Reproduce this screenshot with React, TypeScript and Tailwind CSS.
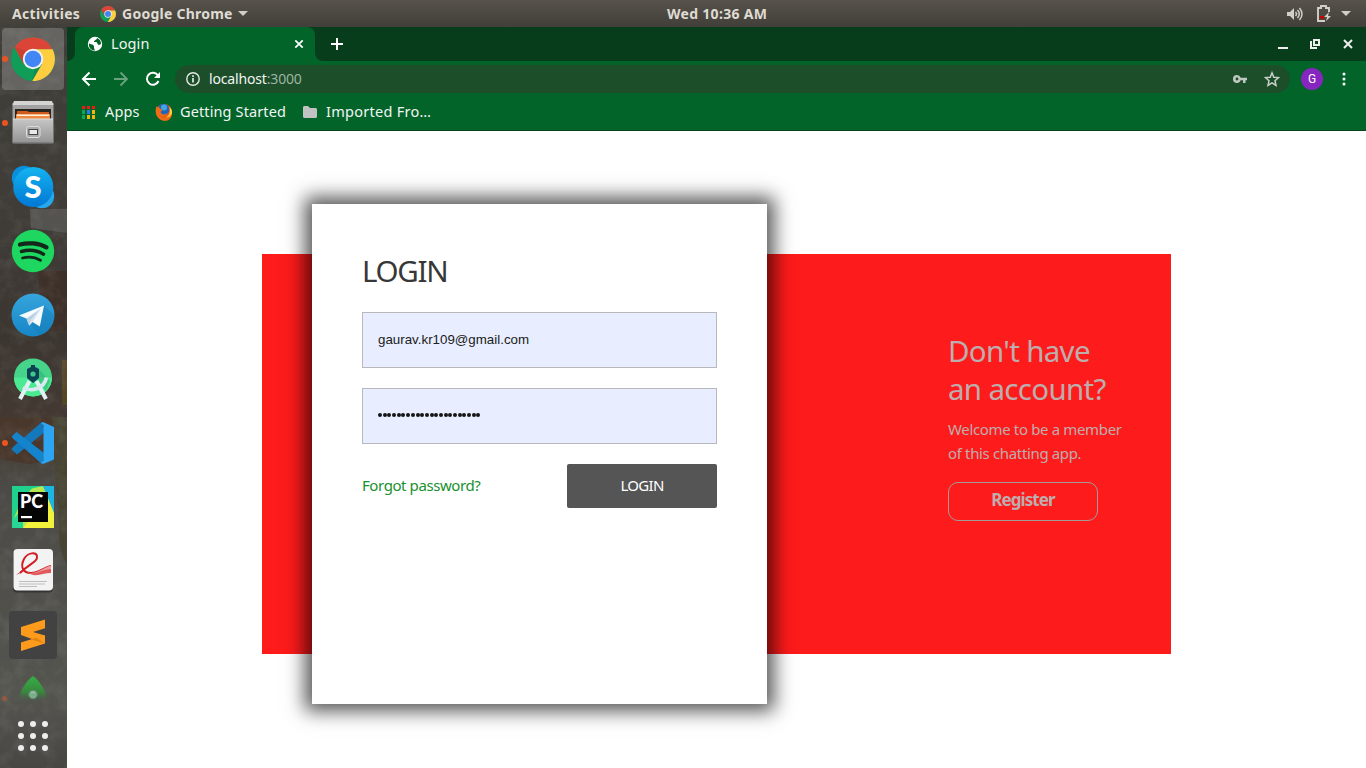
import React from "react";

type IconProps = { className?: string };

const ChromeIcon = ({ className }: IconProps) => (
  <svg viewBox="0 0 44 44" className={className}>
    <circle cx="22" cy="22" r="22" fill="#0f9d58" />
    <path d="M3.500 10.200A22 22 0 0 1 41.600 12.200H22L12.500 27z" fill="#db4437" />
    <path d="M22 12.200H41.600A22 22 0 0 1 21.200 44L31 27z" fill="#ffcd40" />
    <path d="M3.500 10.200 12.900 27 16 14z" fill="#b23a2c" opacity=".35" />
    <path d="M31 27 21.200 44 24 31z" fill="#0b7a44" opacity=".4" />
    <circle cx="22" cy="22" r="10.200" fill="#f1f1f1" />
    <circle cx="22" cy="22" r="8.300" fill="#4285f4" />
  </svg>
);

const FilesIcon = () => (
  <svg viewBox="0 0 44 46" className="h-[46px] w-11">
    <defs>
      <linearGradient id="metal" x1="0" y1="0" x2="0" y2="1">
        <stop offset="0" stopColor="#c6c6c6" />
        <stop offset="1" stopColor="#939393" />
      </linearGradient>
    </defs>
    <path d="M1.500 3h41v40h-41z" fill="#a3a3a3" />
    <path d="M3 1h38l1.500 4h-41z" fill="#d4d4d4" />
    <path d="M4 9h36v11H4z" fill="#29251f" />
    <path d="M6 11h10l2 1h20v8H6z" fill="#cf5a1d" />
    <path d="M5 14h34v5H5z" fill="#f08a42" />
    <path d="M6 14.500h32v1.500H6z" fill="#fff1dc" />
    <path d="M2 19h40v24H2z" fill="url(#metal)" />
    <path d="M2 18.500h40v1H2z" fill="#dedede" />
    <path d="M2 42.500h40v1.500H2z" fill="#666" />
    <rect x="15.500" y="26.500" width="13.500" height="11" rx="2" fill="#aaa" stroke="#ddd" />
    <rect x="18" y="29.500" width="8.500" height="5" fill="#e9e9e9" stroke="#444" />
  </svg>
);

const SkypeIcon = () => (
  <svg viewBox="0 0 44 44" className="size-11">
    <defs>
      <linearGradient id="sky" x1="0" y1="0" x2="0" y2="1">
        <stop offset="0" stopColor="#14b4f0" />
        <stop offset="1" stopColor="#0078d4" />
      </linearGradient>
    </defs>
    <circle cx="13" cy="13" r="12.200" fill="#0a8fdc" />
    <circle cx="31" cy="31" r="12.200" fill="#28a8ea" />
    <circle cx="22.300" cy="22" r="20" fill="url(#sky)" />
    <text x="22" y="33" textAnchor="middle" fontFamily="Lato, sans-serif" fontWeight="900" fontSize="31" fill="#fff">S</text>
  </svg>
);

const SpotifyIcon = () => (
  <svg viewBox="0 0 44 44" className="size-11">
    <circle cx="22" cy="22" r="21.200" fill="#1ed760" />
    <g fill="none" stroke="#12281a" strokeLinecap="round">
      <path d="M9 15.600c8-2.300 19-1.700 26.500 2.800" strokeWidth="4.200" />
      <path d="M10.500 22.500c7-2 15.500-1.200 22 2.700" strokeWidth="3.400" />
      <path d="M11.500 29c6-1.500 12.500-1 18 2.300" strokeWidth="2.800" />
    </g>
  </svg>
);

const TelegramIcon = () => (
  <svg viewBox="0 0 44 44" className="size-11">
    <defs>
      <linearGradient id="tg" x1="0" y1="0" x2="0" y2="1">
        <stop offset="0" stopColor="#36a5dc" />
        <stop offset="1" stopColor="#1686c8" />
      </linearGradient>
    </defs>
    <circle cx="22" cy="22" r="21.500" fill="url(#tg)" />
    <path d="M33 12.500 43 22a21.500 21.500 0 0 1-14 20L19 31z" fill="#1273aa" opacity=".28" />
    <path d="M8 22.500 33 12.500 28.800 33.500 21.500 29 18.200 32.500 15.500 25.500z" fill="#f6fafd" />
    <path d="M15.500 25.500 30 15.500 20 27 18.200 32.500z" fill="#b9cfe2" />
    <path d="M20 27 30 15.500 21.500 29 18.200 32.500z" fill="#d5e2ee" />
  </svg>
);

const AndroidStudioIcon = () => (
  <svg viewBox="0 0 44 44" className="size-11">
    <circle cx="22" cy="20.500" r="19" fill="#45d48a" />
    <path d="M3 20.500h38a19 19 0 0 1-38 0z" fill="#4bea92" />
    <path d="M25 9 39 24l-4 10-12-14z" fill="#2faa70" opacity=".5" />
    <path d="M18.500 24 9 42M25.500 24 35 42" stroke="#e2f1f5" strokeWidth="4" />
    <path d="M12 30.500c9 5 21 1 23.500-10" fill="none" stroke="#d6eaf0" strokeWidth="3.600" />
    <path d="M20 8h4v2l4 2v9l-6 5-6-5v-9l4-2z" fill="#0b4254" />
    <circle cx="22" cy="17" r="2.600" fill="#42c88b" />
  </svg>
);

const CodeIcon = () => (
  <svg viewBox="0 0 44 44" className="size-11">
    <path d="M31 1.500 33 11 6 33l-5-4.500 1-2z" fill="#1478bd" stroke="#1478bd" strokeLinejoin="round" />
    <path d="M5.500 11.500 33 32.500 31 42.500 1.500 16.500V15z" fill="#1484cd" stroke="#1484cd" strokeLinejoin="round" />
    <path d="M32 1 43 6v32.500L32 43l-2-1.500 2.500-2V4L30 2.500z" fill="#2ea5f1" />
  </svg>
);

const PyCharmIcon = () => (
  <svg viewBox="0 0 44 44" className="size-11">
    <path d="M1 1h42v42H1z" fill="#20d18d" />
    <path d="M21 3.500 32 1l7 14v28H13L1 38l10-24z" fill="#b4e84e" />
    <path d="M1 36 12 22v21H1z" fill="#29d795" />
    <path d="M12 43 38 12l5 8v23z" fill="#f3f23b" />
    <path d="M32 1h11v27z" fill="#1bb6e2" />
    <path d="M7 7h30v30H7z" fill="#050505" />
    <text x="9" y="23.300" fontFamily="Lato, sans-serif" fontWeight="900" fontSize="18" textLength="23" lengthAdjust="spacingAndGlyphs" fill="#fff">PC</text>
    <path d="M10 31h11v2.200H10z" fill="#fff" />
  </svg>
);

const PdfIcon = () => (
  <svg viewBox="0 0 44 44" className="size-11">
    <rect x="2" y="1.500" width="40" height="42" rx="4" fill="#222" opacity=".6" />
    <rect x="2.500" y="0" width="39.500" height="41.500" rx="4" fill="#f3f3f3" />
    <path d="M9 24C19 14 27 13 26 7c-1-4-9-4-13 3-4 8-1 14 7 14 7 0 12-5 20-7" fill="none" stroke="#cf1f25" strokeWidth="2" />
    <path d="M15 22c9 6 16-3 25-6v8c-9 0-17 6-25-2z" fill="#e05a5e" />
    <path d="M20 24c8 0 13-6 20-7v3c-8 0-13 5-20 4z" fill="#f0a1a3" />
    <path d="M5 26c3-2 5-4 7-5-1 2-4 4-7 5z" fill="#cf1f25" />
    <path d="M8 32.500h28M8 35h26M8 37.500h18" stroke="#bdbdbd" />
  </svg>
);

const SublimeIcon = () => (
  <svg viewBox="0 0 48 48" className="size-12">
    <rect width="48" height="48" rx="4" fill="#424242" />
    <path d="M12 16 36 8.500v8.800L24 21l12 3.500v8L12 40v-8.500l11-3.500-11-4z" fill="#ff9b1c" />
    <path d="m22 28.500 14 4L27 26.500z" fill="#d57b0c" opacity=".7" />
  </svg>
);

const RobotIcon = () => (
  <svg viewBox="0 0 44 40" className="h-10 w-11">
    <defs>
      <linearGradient id="fade" x1="0" y1="0" x2="0" y2="1">
        <stop offset="0" stopColor="#34b045" />
        <stop offset=".6" stopColor="#38873d" />
        <stop offset="1" stopColor="#4b4e48" stopOpacity="0" />
      </linearGradient>
    </defs>
    <path d="M22 9C29 14 34 23 36 31l-6 5H14l-6-5C10 23 15 14 22 9z" fill="url(#fade)" />
    <circle cx="22" cy="27.500" r="4.300" fill="#7cae8c" stroke="#5a8b6c" />
    <path d="M20 26a3 3 0 0 1 4 0" fill="none" stroke="#a8cbb2" />
  </svg>
);

const FirefoxIcon = () => (
  <svg viewBox="0 0 18 18" className="-ml-px size-[18px]">
    <circle cx="9" cy="9" r="8" fill="#e65a16" />
    <circle cx="8.500" cy="6.500" r="5.700" fill="#1d67c1" />
    <circle cx="9" cy="4.500" r="3" fill="#43a4df" />
    <path d="M1.500 3c0 1 1 1 2 1l2 2 2 1-2 2c1 3 5 3 7 1-2 4-5 4-7 3 4 4 9 1 9-8 5 5 2 13-5 13C2 17-1 10 1.500 3z" fill="#ef6b14" />
    <path d="M14 4c2 3 1 9-3 10 3 1 6-2 6-5 0-2-1-4-3-5z" fill="#ffd23f" />
  </svg>
);

const dock = [
  { icon: <ChromeIcon className="size-11" />, running: true, active: true },
  { icon: <FilesIcon />, running: true },
  { icon: <SkypeIcon /> },
  { icon: <SpotifyIcon /> },
  { icon: <TelegramIcon /> },
  { icon: <AndroidStudioIcon /> },
  { icon: <CodeIcon />, running: true },
  { icon: <PyCharmIcon /> },
  { icon: <PdfIcon /> },
  { icon: <SublimeIcon /> },
];

const appColors = [
  "bg-[#f01a13]", "bg-[#f01a13]", "bg-[#f01a13]",
  "bg-[#13a35b]", "bg-[#2979e8]", "bg-[#f6b40e]",
  "bg-[#13a35b]", "bg-[#f6b40e]", "bg-[#f6b40e]",
];

function TopBar() {
  return (
    <header className="flex h-[27px] shrink-0 items-center bg-gradient-to-b from-[#57534b] to-[#413f39] pl-3 pr-[15px] text-[14px] font-bold text-[#dfdbd2]">
      <span className="w-[88px] tracking-[0.32px]">Activities</span>
      <ChromeIcon className="size-4" />
      <span className="ml-1.5 w-[112px] whitespace-nowrap tracking-[0.25px]">Google Chrome</span>
      <svg viewBox="0 0 10 5" className="ml-1 h-[5px] w-[10px]"><path d="M0 0h10L5 5z" fill="#d3cfc7" /></svg>
      <span className="ml-[419px] whitespace-nowrap pb-px tracking-[0.3px]">Wed 10:36 AM</span>
      <svg viewBox="0 0 16 14" className="ml-auto h-3.5 w-4" fill="none" stroke="#d3cfc7" strokeWidth="1.500">
        <path d="M0 5h3l4-4v12L3 9H0z" fill="#d3cfc7" stroke="none" />
        <path d="M8.500 5q2 2 0 4M10.500 3q3.500 4 0 8M12.500 1q5 6 0 12" />
      </svg>
      <svg viewBox="0 0 15 17" className="ml-[14px] h-[17px] w-[15px]" fill="none">
        <path d="M12 7V3H9V1H4v2H1v13h7" stroke="#d3cfc7" strokeWidth="1.900" />
        <path d="M3 11h4v2.500H3z" fill="#d40000" />
        <path d="m12 7-5 5h3l-1 4 5-5h-3z" fill="#d3cfc7" />
      </svg>
      <svg viewBox="0 0 10 5" className="ml-[9px] h-[5px] w-[10px]"><path d="M0 0h10L5 5z" fill="#d3cfc7" /></svg>
    </header>
  );
}

function Dock() {
  return (
    <aside className="relative flex w-[67px] shrink-0 flex-col overflow-hidden bg-[#44423e]">
      <svg viewBox="0 0 67 741" className="absolute inset-0 h-[741px] w-[67px]">
        <defs>
          <linearGradient id="wall" x1="0" y1="0" x2="0" y2="1">
            <stop offset="0" stopColor="#3f3e39" />
            <stop offset=".22" stopColor="#403d38" />
            <stop offset=".42" stopColor="#3c3631" />
            <stop offset=".55" stopColor="#453a32" />
            <stop offset=".62" stopColor="#4b4a46" />
            <stop offset=".9" stopColor="#555550" />
            <stop offset="1" stopColor="#484643" />
          </linearGradient>
          <filter id="grain">
            <feTurbulence type="fractalNoise" baseFrequency=".07" numOctaves="4" seed="8" />
            <feColorMatrix type="matrix" values="0 0 0 0 .55  0 0 0 0 .53  0 0 0 0 .48  1.500 0 0 0 -.65" />
          </filter>
        </defs>
        <path d="M0 0h67v741H0z" fill="url(#wall)" />
        <path d="M30 182h37v24l-36-5z" fill="#55534f" />
        <path d="M38 244h29v60H42z" fill="#3d3029" />
        <path d="M62 333h5v45h-5z" fill="#544622" />
        <path d="M0 391h55v40l-25 6-30-5z" fill="#49372c" />
        <path d="M52 390h15v150l-7-20z" fill="#474434" />
        <path d="M0 0h67v741H0z" filter="url(#grain)" opacity=".16" />
      </svg>
      {dock.map((item, i) => (
        <div key={i} className="relative flex h-16 shrink-0 items-center justify-center pr-px">
          <div className={item.active ? "flex h-[62px] w-[62px] items-center justify-center rounded bg-white/20" : "flex items-center justify-center"}>
            {item.icon}
          </div>
          {item.running && <span className="absolute left-[2px] top-[29px] size-[6px] rounded-full bg-[#e95420]" />}
        </div>
      ))}
      <div className="relative flex h-10 shrink-0 justify-center pr-px">
        <RobotIcon />
        <span className="absolute left-[2px] top-[29px] size-[5px] rounded-full bg-[#e95420]/40" />
      </div>
      <div className="relative ml-[18px] mt-[14px] grid w-[30px] grid-cols-3 gap-1.5">
        {Array.from({ length: 9 }, (_, i) => <span key={i} className="size-1.5 rounded-full bg-[#eeeeec]" />)}
      </div>
    </aside>
  );
}

function BrowserChrome() {
  return (
    <div className="flex h-[104px] shrink-0 flex-col border-b border-[#05421d] bg-[#03642a] text-[#f1f5f2]">
      <div className="flex h-[34px] bg-[#083d1b]">
        <div className="w-2 bg-[#03642a]"><div className="h-full w-2 rounded-br-lg bg-[#083d1b]" /></div>
        <div className="flex w-60 items-center rounded-t-lg bg-[#03642a] pl-3 pr-[11px]">
          <svg viewBox="0 0 16 16" className="size-4">
            <circle cx="8" cy="8" r="7.200" fill="#fff" />
            <path d="M2 7.500c2 .5 4 1 5 2.500v2l1 2.500C4 14.500 1.500 11.500 2 7.500zM10 2c0 2-3 2-3 4h2c2 0 1 3 3 3l2-1c.2-3-1.500-5-4-6z" fill="#03642a" />
          </svg>
          <span className="ml-2 flex-1 text-[14.500px] tracking-[0.1px]">Login</span>
          <svg viewBox="0 0 10 10" className="size-[10px]"><path d="m1.300 1.300 7.400 7.400m0-7.400-7.400 7.400" stroke="#fff" strokeWidth="1.700" /></svg>
        </div>
        <div className="w-2 bg-[#03642a]"><div className="h-full w-2 rounded-bl-lg bg-[#083d1b]" /></div>
        <svg viewBox="0 0 12 12" className="ml-2 mt-[11px] size-3"><path d="M6 0v12M0 6h12" stroke="#fff" strokeWidth="2" /></svg>
        <div className="ml-auto flex items-center gap-[22px] pr-[13px]">
          <svg viewBox="0 0 10 10" className="-ml-px mr-px size-[10px]"><path d="M0 8h10v2H0z" fill="#eee" /></svg>
          <svg viewBox="0 0 10 10" className="-ml-px mr-px size-[10px]" fill="none" stroke="#eee" strokeWidth="2"><path d="M4 1h5v5H4zM1 2v7h6" /></svg>
          <svg viewBox="0 0 10 10" className="size-[10px]"><path d="m1 1 8 8m0-8-8 8" stroke="#eee" strokeWidth="2" /></svg>
        </div>
      </div>
      <div className="flex h-9 items-center pl-[14px]">
        <svg viewBox="0 0 16 16" className="size-4" fill="none" stroke="#fff" strokeWidth="2"><path d="M15 8H2m6.500-6.500L2 8l6.500 6.500" /></svg>
        <svg viewBox="0 0 16 16" className="ml-4 size-4" fill="none" stroke="#6aa27d" strokeWidth="1.800"><path d="M1 8h13M7.500 1.500 14 8l-6.500 6.500" /></svg>
        <svg viewBox="0 0 16 16" className="ml-4 size-4" fill="none" stroke="#fff" strokeWidth="2"><path d="M13.500 10A6 6 0 1 1 13 4.500" /><path d="M15 1v6H9z" fill="#fff" stroke="none" /></svg>
        <div className="ml-[14px] flex h-7 w-[1115px] items-center rounded-full bg-[#1c4e2a] px-[11px]">
          <svg viewBox="0 0 14 14" className="size-3.5" fill="none" stroke="#e5e9e6" strokeWidth="1.400"><circle cx="7" cy="7" r="6.200" /><path d="M7 6v4.500M7 3.300V5" strokeWidth="1.700" /></svg>
          <span className="ml-[9px] flex-1 pb-px text-[14px] tracking-[-0.16px]">localhost<span className="text-[#9cb3a2]">:3000</span></span>
          <svg viewBox="0 0 14 8" className="h-2 w-3.5" fill="#bec8c1"><path fillRule="evenodd" d="M4 0a4 4 0 1 0 3.700 5.300H10V8h2.500V5.300H14V2.700H7.700A4 4 0 0 0 4 0zm0 2.600a1.400 1.400 0 1 1 0 2.800 1.400 1.400 0 0 1 0-2.800z" /></svg>
          <svg viewBox="0 0 16 16" className="-mr-px ml-[17px] size-4" fill="none" stroke="#c8d0ca" strokeWidth="1.500"><path d="m8 1.800 1.800 4.400 4.700.4-3.500 3.100 1 4.700-4-2.500-4 2.500 1-4.700-3.500-3.100 4.700-.4z" /></svg>
        </div>
        <div className="ml-[11px] flex size-[22px] items-center justify-center rounded-full bg-[#8725c0] font-[Roboto] text-[12px] text-white">G</div>
        <svg viewBox="0 0 4 14" className="ml-[19px] h-3.5 w-1" fill="#fff"><circle cx="2" cy="2" r="1.500" /><circle cx="2" cy="7" r="1.500" /><circle cx="2" cy="12" r="1.500" /></svg>
      </div>
      <div className="flex h-[30px] items-center pl-[15px] text-[14.500px]">
        <div className="grid w-[13px] grid-cols-3 gap-x-[2px] gap-y-px">
          {appColors.map((c, i) => <span key={i} className={i < 3 ? `h-[3px] w-[3px] ${c}` : `h-1 w-[3px] ${c}`} />)}
        </div>
        <span className="ml-[10px] w-[51px] tracking-[0.15px]">Apps</span>
        <FirefoxIcon />
        <span className="ml-[7px] w-[123px] whitespace-nowrap tracking-[0.12px]">Getting Started</span>
        <svg viewBox="0 0 14 12" className="h-3 w-3.5"><path d="M1 0h4l2 2h6l1 1v8l-1 1H1l-1-1V1z" fill="#c2c2c2" /></svg>
        <span className="ml-[9px] whitespace-nowrap tracking-[0.27px]">Imported Fro…</span>
      </div>
    </div>
  );
}

function LoginPage() {
  return (
    <main className="min-h-0 flex-1 overflow-hidden bg-white pl-[195px] pt-[73px]">
      <div className="grid h-[500px] w-[909px] grid-cols-[50px_455px_1fr] items-center">
        <div className="h-[400px] bg-[#fd1b1b]" />
        <section className="relative z-10 h-[500px] bg-white px-[50px] pt-[46px] shadow-[0_0_18px_7px_rgba(0,0,0,0.67)]">
          <h1 className="text-[29.500px] leading-[42px] tracking-[-1.3px] text-[#373737]">LOGIN</h1>
          <div className="mt-5 flex h-14 items-center border border-[#b9b9b9] bg-[#e8eeff] px-[15px] pb-px font-['Liberation_Sans',sans-serif] text-[13.333px] text-[#202020]">gaurav.kr109@gmail.com</div>
          <div className="mt-5 flex h-14 items-center gap-[0.700px] border border-[#b9b9b9] bg-[#e8eeff] px-[15px] pb-[2px]">
            {Array.from({ length: 22 }, (_, i) => <span key={i} className="size-1 shrink-0 rounded-full bg-[#151515]" />)}
          </div>
          <div className="mt-5 flex h-11 items-center justify-between text-[15px]">
            <a className="whitespace-nowrap pb-[2px] tracking-[-0.420px] text-[#19902e]">Forgot password?</a>
            <button className="h-11 w-[150px] rounded-[2px] bg-[#555] pb-[2px] tracking-[-0.700px] text-white">LOGIN</button>
          </div>
        </section>
        <section className="h-[400px] bg-[#fd1b1b] pl-[181px] pt-[78px] text-[#bdadad]">
          <h2 className="whitespace-nowrap text-[29.500px] leading-[38px] tracking-[-0.680px]">Don't have<br />an account?</h2>
          <p className="mt-[9px] whitespace-nowrap text-[15px] leading-6 tracking-[-0.350px]">Welcome to be a member<br />of this chatting app.</p>
          <button className="mt-[17px] flex h-[39px] w-[150px] items-center justify-center rounded-[10px] border border-[#a49b9b] pb-[3px] text-[17px] font-bold tracking-[-0.900px]">Register</button>
        </section>
      </div>
    </main>
  );
}

export default function App() {
  return (
    <div className="flex h-screen w-screen flex-col overflow-hidden font-['Noto_Sans',sans-serif]">
      <TopBar />
      <div className="flex min-h-0 flex-1">
        <Dock />
        <div className="flex min-w-0 flex-1 flex-col">
          <BrowserChrome />
          <LoginPage />
        </div>
      </div>
    </div>
  );
}
